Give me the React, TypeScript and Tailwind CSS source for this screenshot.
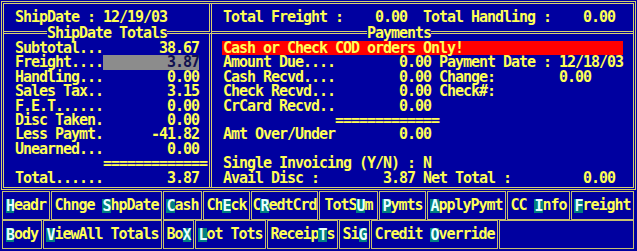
const line = 'h-[14.4px] leading-[14.4px] whitespace-pre'

const leftRows: [string, string][] = [
  ['Subtotal...', '38.67'],
  ['Freight....', '3.87'],
  ['Handling...', '0.00'],
  ['Sales Tax..', '3.15'],
  ['F.E.T......', '0.00'],
  ['Disc Taken.', '0.00'],
  ['Less Paymt.', '-41.82'],
  ['Unearned...', '0.00'],
]

const rightRows = [
  'Amount Due....        0.00 Payment Date : 12/18/03',
  'Cash Recvd....        0.00 Change:        0.00',
  'Check Recvd...        0.00 Check#:',
  'CrCard Recvd..        0.00',
  '              =============',
  'Amt Over/Under        0.00',
  '',
  'Single Invoicing (Y/N) : N',
  'Avail Disc :        3.87 Net Total :         0.00',
]

type Btn = { w: string; pre: string; k: string; post: string }

const row1: Btn[] = [
  { w: 'w-[48px]', pre: '', k: 'H', post: 'eadr' },
  { w: 'w-[111px]', pre: 'Chnge ', k: 'S', post: 'hpDate' },
  { w: 'w-[39px]', pre: '', k: 'C', post: 'ash' },
  { w: 'w-[47px]', pre: 'Ch', k: 'E', post: 'ck' },
  { w: 'w-[67px]', pre: 'C', k: 'R', post: 'edtCrd' },
  { w: 'w-[59px]', pre: 'TotS', k: 'U', post: 'm' },
  { w: 'w-[47px]', pre: '', k: 'P', post: 'ymts' },
  { w: 'w-[79px]', pre: '', k: 'A', post: 'pplyPymt' },
  { w: 'w-[63px]', pre: 'CC ', k: 'I', post: 'nfo' },
  { w: 'w-[63px]', pre: '', k: 'F', post: 'reight' },
]

const row2: Btn[] = [
  { w: 'w-[40px]', pre: '', k: 'B', post: 'ody' },
  { w: 'w-[119px]', pre: '', k: 'V', post: 'iewAll Totals' },
  { w: 'w-[31px]', pre: 'Bo', k: 'X', post: '' },
  { w: 'w-[71px]', pre: '', k: 'L', post: 'ot Tots' },
  { w: 'w-[71px]', pre: 'Receip', k: 'T', post: 's' },
  { w: 'w-[31px]', pre: 'Si', k: 'G', post: '' },
  { w: 'w-[127px]', pre: 'Credit ', k: 'O', post: 'verride' },
  { w: 'w-[135px]', pre: '', k: '', post: '' },
]

const ButtonRow = ({ items }: { items: Btn[] }) => (
  <div className="flex gap-px pl-[2px] h-[29px]">
    {items.map((b, i) => (
      <div
        key={i}
        className={`${b.w} h-full border border-[#c8c070] flex items-center justify-center whitespace-pre`}
      >
        {b.pre}
        {b.k && (
          <span className="inline-block h-[14px] leading-[14px] bg-[#008080] text-[#e8ffff]">{b.k}</span>
        )}
        {b.post}
      </div>
    ))}
  </div>
)

export default function App() {
  return (
    <div className="w-[637px] h-[251px] overflow-hidden bg-[#0000a0] text-[#ffff55] font-['DejaVu_Sans_Mono','Liberation_Mono',monospace] font-bold text-[15px] tracking-[-1.03px]">
      <div className="mt-px ml-px w-[635px] h-[189px] border-[3px] border-double border-[#d8d070] grid grid-cols-[208px_1fr] grid-rows-[30px_1fr]">
        {/* header left */}
        <div className="border-r-[3px] border-b-[3px] border-double border-[#d8d070] flex items-center pl-[11px] whitespace-pre">
          ShipDate : 12/19/03
        </div>
        {/* header right */}
        <div className="border-b-[3px] border-double border-[#d8d070] flex items-center pl-[11px] whitespace-pre">
          Total Freight :    0.00  Total Handling :    0.00
        </div>

        {/* ShipDate totals */}
        <div className="relative border-r-[3px] border-double border-[#d8d070] pl-[11px] pt-[7px]">
          <div className="absolute left-[43px] top-[-8px] h-[14px] leading-[14px] bg-[#0000a0] whitespace-pre">
            ShipDate Totals
          </div>
          {leftRows.map(([label, val]) =>
            label === 'Freight....' ? (
              <div key={label} className={`${line} flex`}>
                <span>{label}</span>
                <span className="w-[96px] text-right bg-[#8c8c8c] text-[#101050]">{val}</span>
              </div>
            ) : (
              <div key={label} className={line}>
                {label + val.padStart(12)}
              </div>
            ),
          )}
          <div className={line}>{'           ============='}</div>
          <div className={line}>{'Total......' + '3.87'.padStart(12)}</div>
        </div>

        {/* Payments */}
        <div className="relative pl-[10px] pt-[7px]">
          <div className="absolute left-[155px] top-[-8px] h-[14px] leading-[14px] bg-[#0000a0] whitespace-pre">
            Payments
          </div>
          <div className={`${line} w-[401px] bg-[#ff0000] pl-px`}>Cash or Check COD orders Only!</div>
          {rightRows.map((r, i) => (
            <div key={i} className={`${line} pl-px`}>
              {r}
            </div>
          ))}
        </div>
      </div>

      <div className="pt-px">
        <ButtonRow items={row1} />
      </div>
      <ButtonRow items={row2} />
    </div>
  )
}
